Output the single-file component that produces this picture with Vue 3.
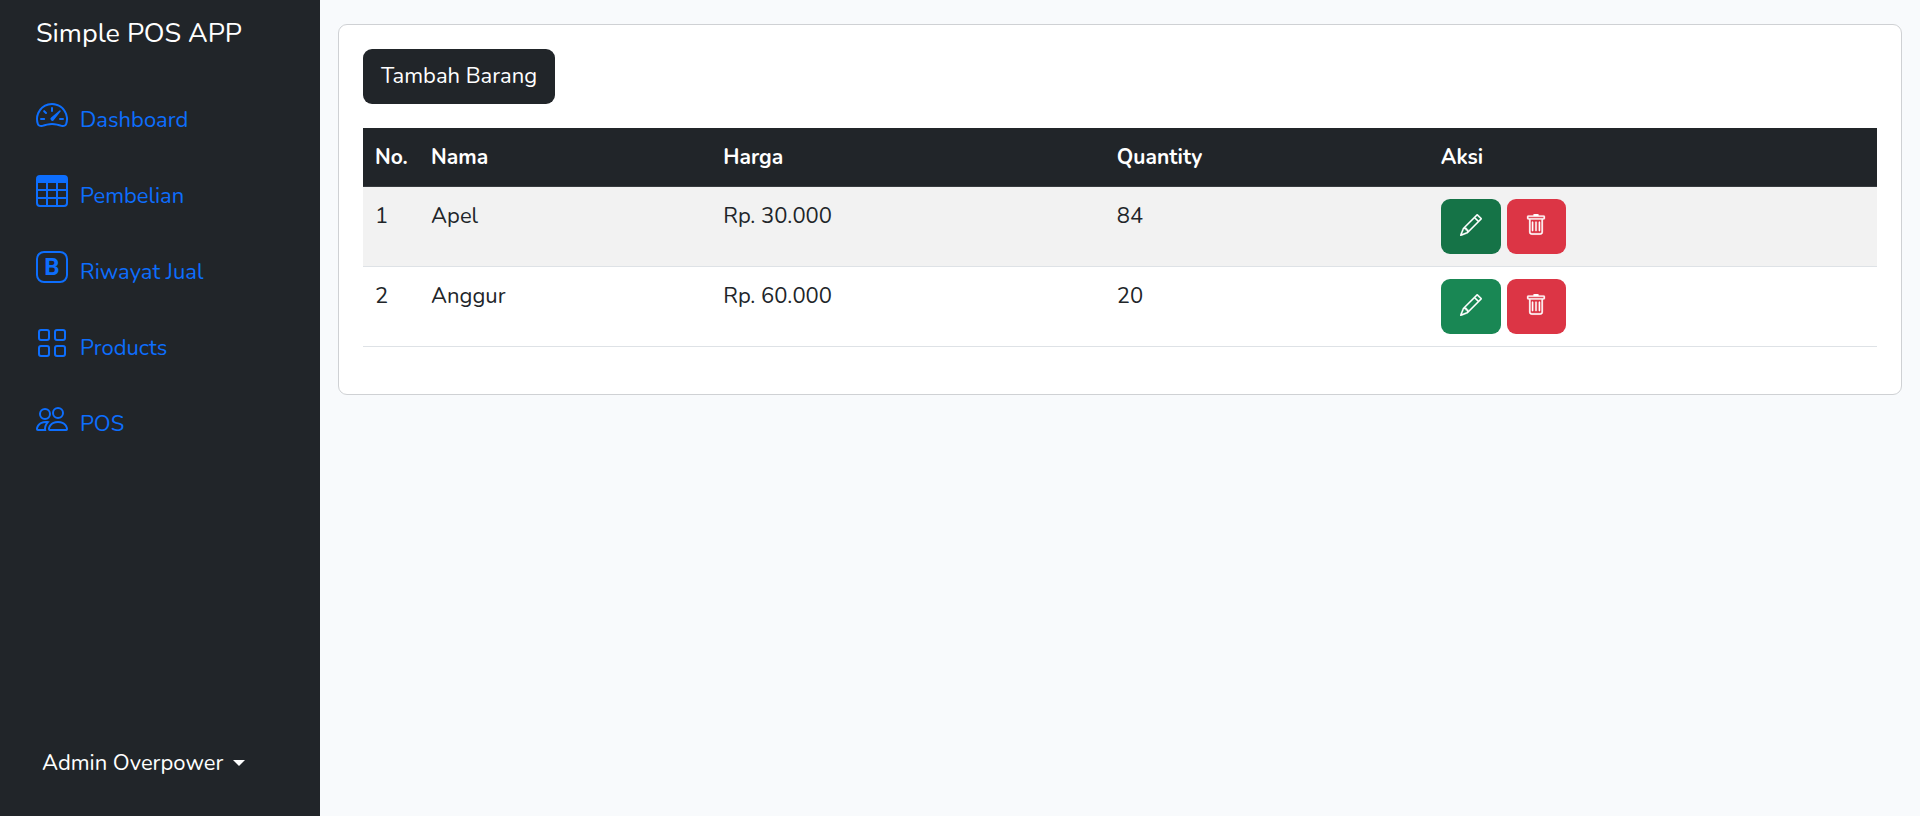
<script setup>
const links = [
  { label: 'Dashboard', icon: 'speedometer' },
  { label: 'Pembelian', icon: 'table' },
  { label: 'Riwayat Jual', icon: 'letter' },
  { label: 'Products', icon: 'grid' },
  { label: 'POS', icon: 'people' },
]

const products = [
  { id: 1, name: 'Apel', price: 'Rp. 30.000', quantity: 84, active: true },
  { id: 2, name: 'Anggur', price: 'Rp. 60.000', quantity: 20, active: false },
]
</script>

<template>
  <div class="layout">
    <aside class="sidebar">
      <a class="brand" href="#">Simple POS APP</a>
      <nav class="menu" aria-label="Menu">
        <a v-for="link in links" :key="link.label" class="menu-link" href="#">
          <svg class="menu-icon" viewBox="0 0 16 16" fill="currentColor" aria-hidden="true">
            <template v-if="link.icon === 'speedometer'">
              <path d="M8 4a.5.5 0 0 1 .5.5V6a.5.5 0 0 1-1 0V4.500A.5.5 0 0 1 8 4zM3.732 5.732a.5.5 0 0 1 .707 0l.915.914a.5.5 0 1 1-.708.708l-.914-.915a.5.5 0 0 1 0-.707zM2 10a.5.5 0 0 1 .5-.5h1.586a.5.5 0 0 1 0 1H2.500A.5.5 0 0 1 2 10zm9.500 0a.5.5 0 0 1 .5-.5h1.500a.5.5 0 0 1 0 1H12a.5.5 0 0 1-.5-.5zm.754-4.246a.389.389 0 0 0-.527-.02L7.547 9.310a.91.91 0 1 0 1.302 1.258l3.434-4.297a.389.389 0 0 0-.029-.518z" />
              <path fill-rule="evenodd" d="M0 10a8 8 0 1 1 15.547 2.661c-.442 1.253-1.845 1.602-2.932 1.250C11.309 13.488 9.475 13 8 13c-1.474 0-3.310.488-4.615.911-1.087.352-2.490.003-2.932-1.250A7.988 7.988 0 0 1 0 10zm8-7a7 7 0 0 0-6.603 9.329c.203.575.923.876 1.680.630C4.397 12.533 6.358 12 8 12s3.604.532 4.923.960c.757.245 1.477-.056 1.680-.631A7 7 0 0 0 8 3z" />
            </template>
            <path v-else-if="link.icon === 'table'" d="M0 2a2 2 0 0 1 2-2h12a2 2 0 0 1 2 2v12a2 2 0 0 1-2 2H2a2 2 0 0 1-2-2V2zm15 2h-4v3h4V4zm0 4h-4v3h4V8zm0 4h-4v3h3a1 1 0 0 0 1-1v-2zm-5 3v-3H6v3h4zm-5 0v-3H1v2a1 1 0 0 0 1 1h3zm-4-4h4V8H1v3zm0-4h4V4H1v3zm5-3v3h4V4H6zm4 4H6v3h4V8z" />
            <template v-else-if="link.icon === 'letter'">
              <rect x=".5" y=".5" width="15" height="15" rx="3.500" fill="none" stroke="currentColor" />
              <text x="8" y="12" text-anchor="middle" class="icon-letter">B</text>
            </template>
            <path v-else-if="link.icon === 'grid'" d="M1 2.500A1.500 1.500 0 0 1 2.500 1h3A1.500 1.500 0 0 1 7 2.500v3A1.500 1.500 0 0 1 5.500 7h-3A1.500 1.500 0 0 1 1 5.500v-3zM2.500 2a.5.5 0 0 0-.5.5v3a.5.5 0 0 0 .5.5h3a.5.5 0 0 0 .5-.5v-3a.5.5 0 0 0-.5-.5h-3zm6.500.5A1.500 1.500 0 0 1 10.500 1h3A1.500 1.500 0 0 1 15 2.500v3A1.500 1.500 0 0 1 13.500 7h-3A1.500 1.500 0 0 1 9 5.500v-3zm1.500-.5a.5.5 0 0 0-.5.5v3a.5.5 0 0 0 .5.5h3a.5.5 0 0 0 .5-.5v-3a.5.5 0 0 0-.5-.5h-3zM1 10.500A1.500 1.500 0 0 1 2.500 9h3A1.500 1.500 0 0 1 7 10.500v3A1.500 1.500 0 0 1 5.500 15h-3A1.500 1.500 0 0 1 1 13.500v-3zm1.500-.5a.5.5 0 0 0-.5.5v3a.5.5 0 0 0 .5.5h3a.5.5 0 0 0 .5-.5v-3a.5.5 0 0 0-.5-.5h-3zm6.500.5A1.500 1.500 0 0 1 10.500 9h3a1.500 1.500 0 0 1 1.500 1.500v3a1.500 1.500 0 0 1-1.500 1.500h-3A1.500 1.500 0 0 1 9 13.500v-3zm1.500-.5a.5.5 0 0 0-.5.5v3a.5.5 0 0 0 .5.5h3a.5.5 0 0 0 .5-.5v-3a.5.5 0 0 0-.5-.5h-3z" />
            <path v-else d="M15 14s1 0 1-1-1-4-5-4-5 3-5 4 1 1 1 1h8Zm-7.978-1A.261.261 0 0 1 7 12.996c.001-.264.167-1.030.760-1.720C8.312 10.629 9.282 10 11 10c1.717 0 2.687.630 3.240 1.276.593.690.758 1.457.760 1.720l-.008.002a.274.274 0 0 1-.014.002H7.022ZM11 7a2 2 0 1 0 0-4 2 2 0 0 0 0 4Zm3-2a3 3 0 1 1-6 0 3 3 0 0 1 6 0ZM6.936 9.280a5.880 5.880 0 0 0-1.230-.247A7.350 7.350 0 0 0 5 9c-4 0-5 3-5 4 0 .667.333 1 1 1h4.216A2.238 2.238 0 0 1 5 13c0-1.010.377-2.042 1.090-2.904.243-.294.526-.569.846-.816ZM4.920 10A5.493 5.493 0 0 0 4 13H1c0-.260.164-1.030.760-1.724.545-.636 1.492-1.256 3.160-1.275ZM1.500 5.500a3 3 0 1 1 6 0 3 3 0 0 1-6 0Zm3-2a2 2 0 1 0 0 4 2 2 0 0 0 0-4Z" />
          </svg>
          <span>{{ link.label }}</span>
        </a>
      </nav>
      <button class="account" type="button" aria-haspopup="true">
        Admin Overpower
        <span class="caret" aria-hidden="true"></span>
      </button>
    </aside>

    <main class="content">
      <section class="card">
        <button class="btn btn-dark" type="button">Tambah Barang</button>
        <table class="products">
          <colgroup>
            <col class="col-no" />
            <col class="col-name" />
            <col class="col-price" />
            <col class="col-quantity" />
            <col />
          </colgroup>
          <thead>
            <tr>
              <th scope="col">No.</th>
              <th scope="col">Nama</th>
              <th scope="col">Harga</th>
              <th scope="col">Quantity</th>
              <th scope="col">Aksi</th>
            </tr>
          </thead>
          <tbody>
            <tr v-for="product in products" :key="product.id">
              <td>{{ product.id }}</td>
              <td>{{ product.name }}</td>
              <td>{{ product.price }}</td>
              <td>{{ product.quantity }}</td>
              <td>
                <div class="actions">
                  <button class="btn btn-edit" :class="{ active: product.active }" type="button" :aria-label="`Edit ${product.name}`">
                    <svg class="btn-icon" viewBox="0 0 16 16" fill="currentColor" aria-hidden="true">
                      <path d="M12.146.146a.5.5 0 0 1 .708 0l3 3a.5.5 0 0 1 0 .708l-10 10a.5.5 0 0 1-.168.110l-5 2a.5.5 0 0 1-.650-.650l2-5a.5.5 0 0 1 .110-.168l10-10zM11.207 2.500 13.500 4.793 14.793 3.500 12.500 1.207 11.207 2.500zm1.586 3L10.500 3.207 4 9.707V10h.5a.5.5 0 0 1 .5.5v.5h.5a.5.5 0 0 1 .5.5v.5h.293l6.500-6.500zm-9.761 5.175-.106.106-1.528 3.821 3.821-1.528.106-.106A.5.5 0 0 1 5 12.500V12h-.5a.5.5 0 0 1-.5-.5V11h-.5a.5.5 0 0 1-.468-.325z" />
                    </svg>
                  </button>
                  <button class="btn btn-delete" type="button" :aria-label="`Hapus ${product.name}`">
                    <svg class="btn-icon" viewBox="0 0 16 16" fill="currentColor" aria-hidden="true">
                      <path d="M5.500 5.500A.5.5 0 0 1 6 6v6a.5.5 0 0 1-1 0V6a.5.5 0 0 1 .5-.5zm2.500 0a.5.5 0 0 1 .5.5v6a.5.5 0 0 1-1 0V6a.5.5 0 0 1 .5-.5zm3 .5a.5.5 0 0 0-1 0v6a.5.5 0 0 0 1 0V6z" />
                      <path fill-rule="evenodd" d="M14.500 3a1 1 0 0 1-1 1H13v9a2 2 0 0 1-2 2H5a2 2 0 0 1-2-2V4h-.5a1 1 0 0 1-1-1V2a1 1 0 0 1 1-1H6a1 1 0 0 1 1-1h2a1 1 0 0 1 1 1h3.500a1 1 0 0 1 1 1v1zM4.118 4 4 4.059V13a1 1 0 0 0 1 1h6a1 1 0 0 0 1-1V4.059L11.882 4H4.118zM2.500 3V2h11v1h-11z" />
                    </svg>
                  </button>
                </div>
              </td>
            </tr>
          </tbody>
        </table>
      </section>
    </main>
  </div>
</template>

<style>
body {
  margin: 0;
  background: #f8fafc;
}
</style>

<style scoped>
.layout {
  display: flex;
  min-height: 100vh;
  color: #212529;
  font-family: Nunito, Lato, sans-serif;
  font-size: 22px;
  line-height: 34px;
}

.layout *,
.layout *::before {
  box-sizing: border-box;
}

.sidebar {
  display: flex;
  flex: 0 0 320px;
  flex-direction: column;
  align-items: flex-start;
  padding: 12px 36px 36px;
  background: #212529;
}

.brand {
  color: #fff;
  font-size: 27px;
  line-height: 44px;
  text-decoration: none;
}

.menu {
  display: flex;
  flex-direction: column;
  gap: 36px;
  margin-top: 39px;
}

.menu-link {
  display: flex;
  align-items: center;
  gap: 12px;
  height: 40px;
  color: #0d6efd;
  text-decoration: none;
}

.menu-link span {
  padding-top: 10px;
}

.menu-icon {
  width: 32px;
  height: 32px;
}

.icon-letter {
  font-family: Roboto, sans-serif;
  font-size: 12px;
  font-weight: 700;
}

.account {
  display: flex;
  align-items: center;
  gap: 10px;
  margin-top: auto;
  padding: 0 6px;
  border: 0;
  background: none;
  color: #fff;
  font: inherit;
}

.caret {
  border-top: 6px solid #fff;
  border-right: 6px solid transparent;
  border-left: 6px solid transparent;
}

.content {
  flex: 1;
  min-width: 0;
  padding: 24px 18px;
}

.card {
  padding: 24px 24px 47px;
  border: 1px solid #cfd1d4;
  border-radius: 9px;
  background: #fff;
}

.btn {
  display: inline-flex;
  align-items: center;
  justify-content: center;
  height: 55px;
  padding: 0 18px;
  border: 0;
  border-radius: 9px;
  color: #fff;
  font: inherit;
}

.btn-dark {
  padding-bottom: 2px;
  background: #212529;
}

.products {
  width: 100%;
  margin-top: 24px;
  border-collapse: collapse;
  table-layout: fixed;
}

.col-no {
  width: 3.7%;
}

.col-name {
  width: 19.3%;
}

.col-price {
  width: 26%;
}

.col-quantity {
  width: 21.4%;
}

.products th,
.products td {
  padding: 12px;
  border-bottom: 1px solid #dee2e6;
  text-align: left;
  vertical-align: top;
}

.products th {
  border-color: #373b3e;
  background: #212529;
  color: #fff;
  font-size: 21px;
  white-space: nowrap;
}

.products tbody tr:nth-child(odd) {
  background: #f2f2f2;
}

.actions {
  display: flex;
  gap: 6px;
}

.btn-edit {
  width: 60px;
  background: #198754;
}

.btn-edit.active {
  background: #157347;
}

.btn-delete {
  width: 59px;
  background: #dc3545;
}

.btn-icon {
  flex: none;
  width: 22px;
  height: 22px;
  margin-bottom: 4px;
  stroke: currentColor;
  stroke-width: .2;
}
</style>
